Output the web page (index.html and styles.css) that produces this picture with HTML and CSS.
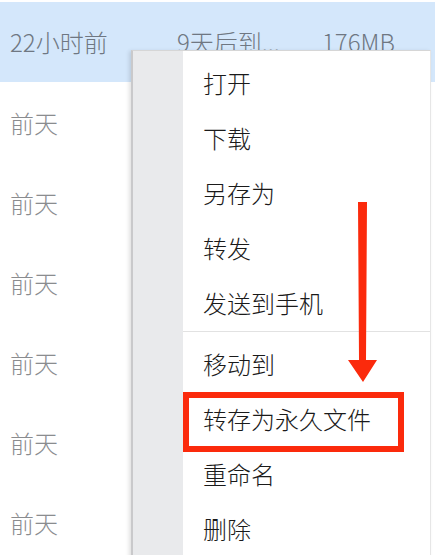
FILE: index.html
```html
<!DOCTYPE html>
<html lang="zh-CN">
<head>
    <meta charset="UTF-8">
    <title>文件列表</title>
    <link rel="stylesheet" href="styles.css">
</head>
<body>
    <div class="file-list">
        <div class="row selected">
            <span class="time">22小时前</span>
            <span class="expire">9天后到...</span>
            <span class="size">176MB</span>
        </div>
        <div class="row"><span class="time">前天</span></div>
        <div class="row"><span class="time">前天</span></div>
        <div class="row"><span class="time">前天</span></div>
        <div class="row"><span class="time">前天</span></div>
        <div class="row"><span class="time">前天</span></div>
        <div class="row"><span class="time">前天</span></div>
    </div>

    <div class="context-menu">
        <div class="menu-item">打开</div>
        <div class="menu-item">下载</div>
        <div class="menu-item">另存为</div>
        <div class="menu-item">转发</div>
        <div class="menu-item">发送到手机</div>
        <div class="menu-sep"></div>
        <div class="menu-item">移动到</div>
        <div class="menu-item">转存为永久文件</div>
        <div class="menu-item">重命名</div>
        <div class="menu-item">删除</div>
    </div>

    <div class="mark-box"></div>
    <svg class="mark-arrow" width="40" height="190" viewBox="0 0 40 190">
        <polygon points="12,0 21,0 20,158 31,158 17,180 2,158 13,158" fill="#fb2a0c"/>
    </svg>
</body>
</html>
```

FILE: styles.css
```css
body {
    margin: 0;
    font-family: "Noto Sans CJK SC", "Noto Sans", sans-serif;
    font-weight: 300;
    background-color: #fff;
    overflow: hidden;
}

.file-list {
    padding-top: 2px;
}

.row {
    height: 80px;
    display: grid;
    grid-template-columns: 167px 145px 1fr;
    align-items: center;
    padding-left: 10px;
    font-size: 24px;
    color: #8a8c8f;
    box-sizing: border-box;
    padding-bottom: 4px;
    padding-top: 4px;
}

.row.selected {
    background-color: #d4e7fb;
    color: #6f7782;
    padding-top: 0;
    padding-bottom: 2px;
}

.context-menu {
    position: absolute;
    left: 131px;
    top: 50px;
    width: 300px;
    height: 520px;
    padding-top: 4px;
    background: linear-gradient(to right, #e9eaec 0, #e9eaec 50px, #fff 50px);
    border-top: 1px solid #d6d6d6;
    border-left: 2px solid #c9c9cb;
    border-right: 1px solid #e6e6e6;
    box-shadow: -2px 1px 4px rgba(0, 0, 0, 0.12);
    box-sizing: border-box;
}

.menu-item {
    height: 55px;
    line-height: 55px;
    padding-left: 70px;
    font-size: 24px;
    color: #1a1a1a;
}

.menu-sep {
    height: 1px;
    margin: 1px 0 4px 50px;
    background-color: #e2e2e2;
}

.mark-box {
    position: absolute;
    left: 183px;
    top: 392px;
    width: 221px;
    height: 60px;
    border: 6px solid #fb2a0c;
    box-sizing: border-box;
}

.mark-arrow {
    position: absolute;
    left: 346px;
    top: 202px;
}
```
